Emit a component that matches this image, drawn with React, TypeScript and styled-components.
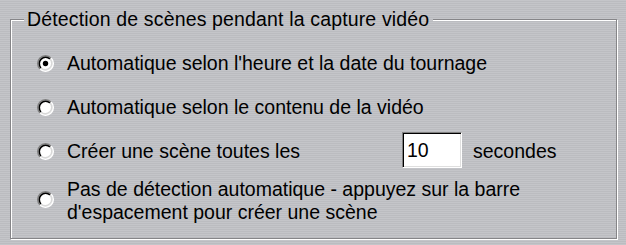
import React from "react";
import styled, { createGlobalStyle } from "styled-components";

const stripes = `repeating-linear-gradient(to bottom, #c4c5c9 0px, #c4c5c9 1px, #bbbcc0 1px, #bbbcc0 2px)`;

const Global = createGlobalStyle`
  html, body {
    margin: 0;
    padding: 0;
    width: 626px;
    height: 245px;
    overflow: hidden;
    background: ${stripes};
    background-attachment: fixed;
  }
  body {
    font-family: "Liberation Sans", Arial, sans-serif;
    font-size: 19.5px;
    color: #000;
  }
`;

const Page = styled.div`
  padding: 19px 0 0 10px;
`;

const Frame = styled.div`
  position: relative;
  box-sizing: border-box;
  width: 607px;
  height: 220px;
  border: 1px solid #858588;
  box-shadow: inset 1px 1px 0 #fff, 1px 1px 0 #fff;
  padding: 21px 0 0 26px;
  display: flex;
  flex-direction: column;
`;

const Legend = styled.div`
  position: absolute;
  top: -12px;
  left: 13px;
  padding: 0 4px 0 3px;
  line-height: 22px;
  white-space: nowrap;
  letter-spacing: 0.15px;
  background: ${stripes};
  background-attachment: fixed;
`;

const Row = styled.label<{ $h: number; $mt?: number }>`
  display: flex;
  align-items: center;
  height: ${(p) => p.$h}px;
  margin-top: ${(p) => p.$mt ?? 0}px;
  line-height: 23px;
  white-space: nowrap;
`;

const RadioBox = styled.span<{ $dy?: number }>`
  flex: none;
  width: 17px;
  height: 17px;
  margin-right: 13px;
  display: flex;
  transform: translateY(${(p) => p.$dy ?? 0}px);
`;

const LabelText = styled.span<{ $w?: number }>`
  display: inline-block;
  ${(p) => (p.$w ? `width: ${p.$w}px;` : "")}
`;

const Field = styled.span`
  box-sizing: border-box;
  width: 60px;
  height: 36px;
  background: #fff;
  border-top: 1px solid #808080;
  border-left: 1px solid #808080;
  border-right: 1px solid #fff;
  border-bottom: 1px solid #fff;
  box-shadow: inset 1px 1px 0 #000, inset -1px -1px 0 #dfdfdf;
  padding: 0 0 0 4px;
  display: flex;
  align-items: center;
  margin-top: -2px;
`;

const Unit = styled.span`
  margin-left: 11px;
`;

const TwoLines = styled.span`
  white-space: normal;
  line-height: 23px;
`;

const Radio: React.FC<{ checked?: boolean; dy?: number }> = ({ checked, dy }) => (
  <RadioBox $dy={dy}>
    <svg width="17" height="17" viewBox="0 0 12 12">
      <circle cx="6" cy="6" r="5" fill="#fff" />
      <path d="M2.11 9.89 A5.5 5.5 0 0 1 9.89 2.11" fill="none" stroke="#808080" strokeWidth="1" />
      <path d="M9.89 2.11 A5.5 5.5 0 0 1 2.11 9.89" fill="none" stroke="#fff" strokeWidth="1" />
      <path d="M2.82 9.18 A4.5 4.5 0 0 1 9.18 2.82" fill="none" stroke="#000" strokeWidth="1.1" />
      <path d="M9.18 2.82 A4.5 4.5 0 0 1 2.82 9.18" fill="none" stroke="#d8d8d8" strokeWidth="1" />
      {checked && <circle cx="6" cy="6" r="1.9" fill="#000" />}
    </svg>
  </RadioBox>
);

export default function App() {
  return (
    <>
      <Global />
      <Page>
        <Frame>
          <Legend>Détection de scènes pendant la capture vidéo</Legend>
          <Row $h={44}>
            <Radio checked />
            <LabelText>Automatique selon l'heure et la date du tournage</LabelText>
          </Row>
          <Row $h={44}>
            <Radio />
            <LabelText>Automatique selon le contenu de la vidéo</LabelText>
          </Row>
          <Row $h={44}>
            <Radio />
            <LabelText $w={335}>Créer une scène toutes les</LabelText>
            <Field>10</Field>
            <Unit>secondes</Unit>
          </Row>
          <Row $h={46} $mt={5}>
            <Radio dy={-2} />
            <TwoLines>
              Pas de détection automatique - appuyez sur la barre
              <br />
              d'espacement pour créer une scène
            </TwoLines>
          </Row>
        </Frame>
      </Page>
    </>
  );
}
